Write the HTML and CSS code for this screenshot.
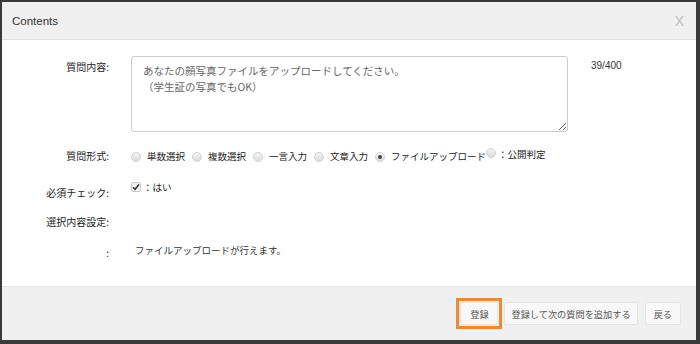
FILE: index.html
```html
<!DOCTYPE html>
<html lang="ja">

<head>
    <meta charset="UTF-8">
    <meta name="viewport" content="width=device-width, initial-scale=1.0">
    <title>Contents</title>
    <link rel="stylesheet" href="styles.css">
</head>

<body>
    <div class="modal">
        <div class="modal-header">
            <span class="modal-title">Contents</span>
            <span class="modal-close">X</span>
        </div>

        <div class="modal-body">
            <div class="row row-question">
                <div class="label label-top">質問内容:</div>
                <textarea class="question-text" readonly>あなたの顔写真ファイルをアップロードしてください。
（学生証の写真でもOK）</textarea>
                <div class="counter">39/400</div>
            </div>

            <div class="row row-type">
                <div class="label">質問形式:</div>
                <div class="options">
                    <span class="radio"></span><span class="opt">単数選択</span>
                    <span class="radio"></span><span class="opt">複数選択</span>
                    <span class="radio"></span><span class="opt">一言入力</span>
                    <span class="radio"></span><span class="opt">文章入力</span>
                    <span class="radio checked"></span><span class="opt opt-tight">ファイルアップロード</span>
                    <span class="radio raised"></span><span class="opt opt-raised">：公開判定</span>
                </div>
            </div>

            <div class="row row-required">
                <div class="label label-low">必須チェック:</div>
                <div class="options">
                    <span class="checkbox">
                        <svg width="8" height="8" viewBox="0 0 8 8">
                            <path d="M1 4.2 L3.1 6.3 L7 1.6" fill="none" stroke="#333" stroke-width="1.6" />
                        </svg>
                    </span>
                    <span class="opt">：はい</span>
                </div>
            </div>

            <div class="row row-setting">
                <div class="label">選択内容設定:</div>
            </div>

            <div class="row row-note">
                <div class="label label-low">:</div>
                <div class="note">ファイルアップロードが行えます。</div>
            </div>
        </div>

        <div class="modal-footer">
            <button class="btn btn-focus">登録</button>
            <button class="btn btn-wide">登録して次の質問を追加する</button>
            <button class="btn">戻る</button>
        </div>
    </div>
</body>

</html>
```

FILE: styles.css
```css
* {
    box-sizing: border-box;
    font-family: "Noto Sans CJK JP", "Liberation Sans", sans-serif;
}

body {
    margin: 0;
    width: 700px;
    height: 344px;
    background-color: #3a3a3a;
    overflow: hidden;
}

.modal {
    margin: 2px 0 0 2px;
    width: 694px;
    height: 338px;
    background-color: white;
    display: flex;
    flex-direction: column;
}

.modal-header {
    height: 38px;
    background-color: #f0f0f0;
    border-bottom: 1px solid #e2e2e2;
    display: flex;
    align-items: center;
    justify-content: space-between;
    padding: 0 12px 0 10px;
}

.modal-title {
    font-family: "Liberation Sans", sans-serif;
    font-size: 11.5px;
    color: #333;
}

.modal-close {
    font-family: "Liberation Sans", sans-serif;
    font-size: 14px;
    color: #bdbdbd;
}

.modal-body {
    flex: 1;
    padding-top: 16px;
}

.row {
    display: flex;
}

.label {
    width: 107px;
    text-align: right;
    font-size: 10px;
    color: #222;
    margin-right: 22px;
    line-height: 14px;
}

.label-top {
    padding-top: 4px;
}

.question-text {
    width: 437px;
    height: 76px;
    border: 1px solid #cccccc;
    border-radius: 3px;
    padding: 6px 11px;
    font-size: 10.5px;
    line-height: 16px;
    color: #666;
    resize: vertical;
    outline: none;
}

.counter {
    margin-left: 23px;
    padding-top: 4px;
    font-family: "Liberation Sans", sans-serif;
    font-size: 10px;
    color: #333;
}

.row-type {
    margin-top: 14px;
    height: 20px;
    align-items: center;
}

.options {
    display: flex;
    align-items: center;
}

.radio {
    width: 10px;
    height: 10px;
    border-radius: 50%;
    border: 1px solid #d0d0d0;
    background: linear-gradient(#f4f4f4, #dcdcdc);
    margin-right: 6px;
    margin-top: 2px;
    display: flex;
    align-items: center;
    justify-content: center;
}

.radio.checked::after {
    content: "";
    width: 4px;
    height: 4px;
    border-radius: 50%;
    background-color: #444;
}

.radio.raised {
    margin-top: -6px;
    margin-right: 2px;
}

.opt {
    font-size: 9.5px;
    color: #222;
    margin-right: 7px;
    line-height: 14px;
}

.opt-tight {
    margin-right: 0;
}

.opt-raised {
    margin-top: -5px;
}

.row-required {
    margin-top: 14px;
    height: 26px;
    align-items: flex-start;
}

.label-low {
    padding-top: 6px;
}

.checkbox {
    width: 10px;
    height: 10px;
    border: 1px solid #c8c8c8;
    border-radius: 2px;
    background-color: #f4f4f4;
    margin-right: 2px;
    display: flex;
    align-items: center;
    justify-content: center;
}

.row-setting {
    margin-top: 3px;
    height: 26px;
    align-items: center;
}

.row-note {
    margin-top: 5px;
    height: 26px;
    align-items: flex-start;
}

.note {
    font-size: 9.5px;
    color: #333;
    padding-left: 4px;
    padding-top: 3px;
    line-height: 14px;
}

.modal-footer {
    height: 54px;
    background-color: #f0f0f0;
    border-top: 1px solid #e6e6e6;
    display: flex;
    align-items: center;
    justify-content: flex-end;
    gap: 6px;
    padding-right: 15px;
}

.btn {
    height: 23px;
    padding: 0 8px;
    font-size: 9.2px;
    color: #555;
    background-color: #f8f8f8;
    border: 1px solid #e4e4e4;
    border-radius: 2px;
}

.btn-wide {
    padding: 0 6px;
    margin-right: 1px;
}

.btn-focus {
    width: 38px;
    border-radius: 0;
    outline: 3px solid #f08a2c;
    outline-offset: 1px;
}
```
